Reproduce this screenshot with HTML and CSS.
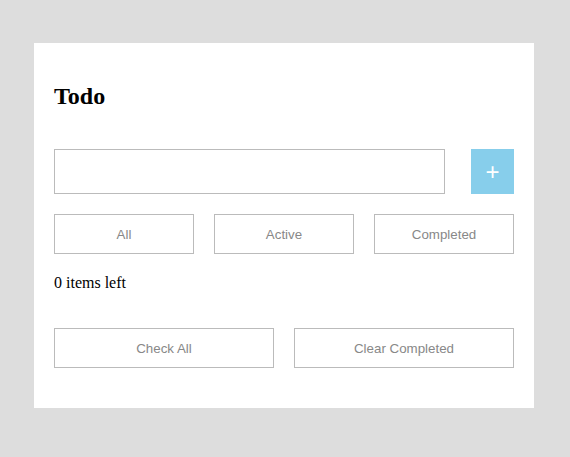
FILE: index.html
```html
<!DOCTYPE html>
<html>
<head>
<meta charset="utf-8">
<link rel="stylesheet" href="styles.css">
</head>
<body>
<div class="card">
  <h2 class="title">Todo</h2>
  <div class="add-row">
    <input class="new-todo" type="text">
    <button class="add-btn">+</button>
  </div>
  <div class="filters">
    <button class="btn">All</button>
    <button class="btn">Active</button>
    <button class="btn">Completed</button>
  </div>
  <p class="count">0 items left</p>
  <div class="actions">
    <button class="btn">Check All</button>
    <button class="btn">Clear Completed</button>
  </div>
</div>
</body>
</html>
```
FILE: styles.css
```css
html, body { margin: 0; padding: 0; }
body {
  background: #dddddd;
  font-family: "Liberation Serif", serif;
  width: 570px;
  height: 457px;
  overflow: hidden;
}
.card {
  box-sizing: border-box;
  width: 500px;
  margin: 43px 0 0 34px;
  background: #fff;
  padding: 20px 20px 40px;
  display: flex;
  flex-direction: column;
}
.title {
  font-family: "Liberation Serif", serif;
  font-size: 24px;
  font-weight: bold;
  line-height: 28px;
  margin: 19px 0 0;
  color: #000;
}
.add-row {
  display: flex;
  justify-content: space-between;
  margin-top: 39px;
}
.new-todo {
  box-sizing: border-box;
  width: 391px;
  height: 45px;
  border: 1px solid #bbbbbb;
  margin: 0;
  padding: 0 8px;
  font-size: 16px;
  outline: none;
}
.add-btn {
  width: 43px;
  height: 45px;
  border: none;
  margin: 0;
  padding: 0;
  background: #87ceeb;
  color: #fff;
  font-family: "Liberation Sans", sans-serif;
  font-size: 24px;
  line-height: 45px;
}
.filters {
  display: grid;
  grid-template-columns: repeat(3, 1fr);
  gap: 20px;
  margin-top: 20px;
}
.btn {
  box-sizing: border-box;
  height: 40px;
  margin: 0;
  padding: 0;
  background: #fff;
  border: 1px solid #bbbbbb;
  color: #888888;
  font-family: "Liberation Sans", sans-serif;
  font-size: 13.333px;
}
.count {
  margin: 20px 0 36px;
  font-size: 16px;
  line-height: 18px;
}
.actions {
  display: grid;
  grid-template-columns: 1fr 1fr;
  gap: 20px;
}
```
